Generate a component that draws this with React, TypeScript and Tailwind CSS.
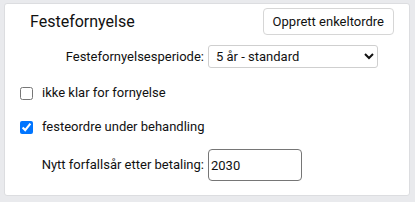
import React, { useState } from 'react';

export default function App() {
  const [periode, setPeriode] = useState('5');
  const [ikkeKlar, setIkkeKlar] = useState(false);
  const [underBehandling, setUnderBehandling] = useState(true);
  const [aar, setAar] = useState('2030');

  return (
    <div className="w-[415px] h-[202px] bg-[#e9eaed] pt-[3px] pl-[4px] font-['Roboto',sans-serif] text-[#111]">
      <div className="w-[406px] h-[193px] bg-white border border-[#dcdde0] rounded-[3px]">
        <div className="flex items-center justify-between h-[27px] pl-[25px] pr-[15px] mt-[4px]">
          <h2 className="text-[16px] leading-none">Festefornyelse</h2>
          <button className="h-[27px] px-[9px] border border-[#d6d6d6] rounded-[4px] text-[13px] bg-white">
            Opprett enkeltordre
          </button>
        </div>

        <div className="flex items-center h-[23px] mt-[10px] text-[13px]">
          <label className="w-[203px] text-right pr-[4px]">Festefornyelsesperiode:</label>
          <select
            value={periode}
            onChange={e => setPeriode(e.target.value)}
            className="w-[170px] h-[23px] border border-[#cfcfcf] rounded-[3px] pl-[3px] bg-white"
          >
            <option value="5">5 år - standard</option>
            <option value="10">10 år</option>
          </select>
        </div>

        <label className="flex items-center gap-[9px] h-[20px] mt-[15px] ml-[15px] text-[13px]">
          <input
            type="checkbox"
            checked={ikkeKlar}
            onChange={e => setIkkeKlar(e.target.checked)}
            className="w-[13px] h-[13px] m-0"
          />
          ikke klar for fornyelse
        </label>

        <label className="flex items-center gap-[9px] h-[20px] mt-[14px] ml-[15px] text-[13px]">
          <input
            type="checkbox"
            checked={underBehandling}
            onChange={e => setUnderBehandling(e.target.checked)}
            className="w-[13px] h-[13px] m-0"
          />
          festeordre under behandling
        </label>

        <div className="flex items-center mt-[12px] text-[13px]">
          <label className="w-[203px] text-right pr-[4px]">Nytt forfallsår etter betaling:</label>
          <input
            value={aar}
            onChange={e => setAar(e.target.value)}
            className="w-[94px] h-[32px] border border-[#767676] rounded-[4px] px-[2px]"
          />
        </div>
      </div>
    </div>
  );
}
